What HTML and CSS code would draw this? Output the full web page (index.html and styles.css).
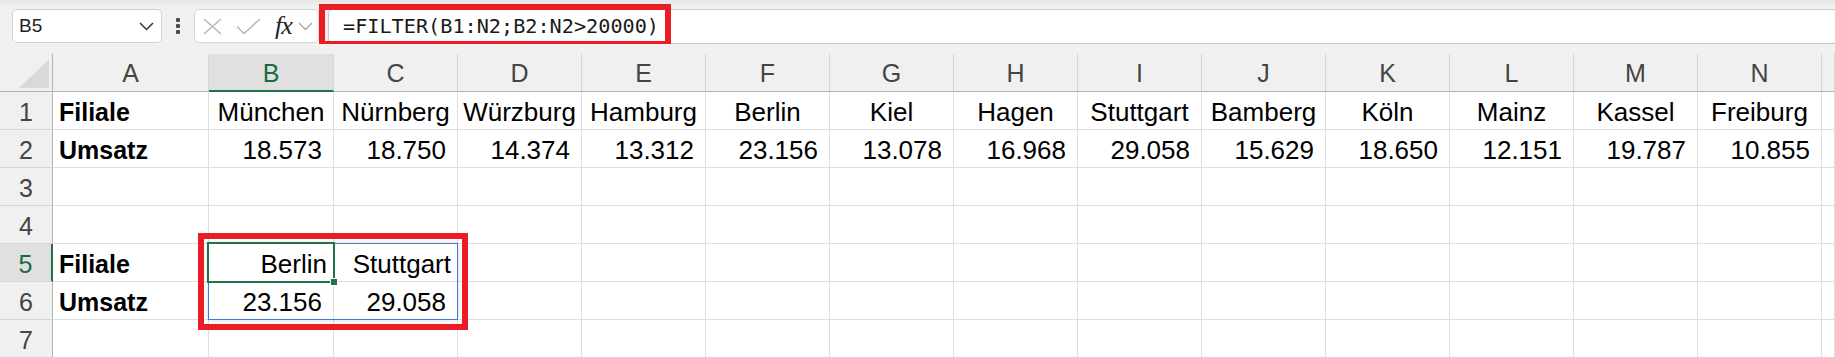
FILE: index.html
```html
<!DOCTYPE html>
<html lang="de">
  <head>
    <meta charset="utf-8">
    <title>FILTER</title>
    <link rel="stylesheet" href="styles.css">
  </head>
  <body>

    <div class="toolbar">
      <div class="namebox">
        <span>B5</span>
        <svg width="15" height="9" viewBox="0 0 15 9"><path d="M1 1l6.5 6.5L14 1" stroke="#333" stroke-width="1.5" fill="none"/></svg>
      </div>
      <div class="dots"><i></i><i></i><i></i></div>
      <div class="fxbtns">
        <svg class="ico-x" width="19" height="17" viewBox="0 0 19 17"><path d="M1 1l17 15M18 1L1 16" stroke="#b8b8b8" stroke-width="1.6" fill="none"/></svg>
        <svg class="ico-ok" width="25" height="17" viewBox="0 0 25 17"><path d="M1 8.5l7 7L24 1" stroke="#b8b8b8" stroke-width="1.6" fill="none"/></svg>
        <span class="fx">fx</span>
        <svg class="ico-dd" width="15" height="9" viewBox="0 0 15 9"><path d="M1 1l6.5 6.5L14 1" stroke="#a5a5a5" stroke-width="1.4" fill="none"/></svg>
      </div>
      <div class="formula">=FILTER(B1:N2;B2:N2&gt;20000)</div>
      <div class="mark formula-mark"></div>
    </div>

    <div class="sheet">
      <!-- column headers -->
      <div class="corner"></div>
      <div class="ch">A</div><div class="ch active">B</div><div class="ch">C</div><div class="ch">D</div>
      <div class="ch">E</div><div class="ch">F</div><div class="ch">G</div><div class="ch">H</div>
      <div class="ch">I</div><div class="ch">J</div><div class="ch">K</div><div class="ch">L</div>
      <div class="ch">M</div><div class="ch">N</div><div class="ch"></div>

      <!-- row 1 -->
      <div class="rh">1</div>
      <div class="c lbl">Filiale</div>
      <div class="c mid">München</div><div class="c mid">Nürnberg</div><div class="c mid">Würzburg</div>
      <div class="c mid">Hamburg</div><div class="c mid">Berlin</div><div class="c mid">Kiel</div>
      <div class="c mid">Hagen</div><div class="c mid">Stuttgart</div><div class="c mid">Bamberg</div>
      <div class="c mid">Köln</div><div class="c mid">Mainz</div><div class="c mid">Kassel</div>
      <div class="c mid">Freiburg</div><div class="c"></div>

      <!-- row 2 -->
      <div class="rh">2</div>
      <div class="c lbl">Umsatz</div>
      <div class="c num">18.573</div><div class="c num">18.750</div><div class="c num">14.374</div>
      <div class="c num">13.312</div><div class="c num">23.156</div><div class="c num">13.078</div>
      <div class="c num">16.968</div><div class="c num">29.058</div><div class="c num">15.629</div>
      <div class="c num">18.650</div><div class="c num">12.151</div><div class="c num">19.787</div>
      <div class="c num">10.855</div><div class="c"></div>

      <!-- row 3 -->
      <div class="rh">3</div>
      <div class="c"></div><div class="c"></div><div class="c"></div><div class="c"></div><div class="c"></div>
      <div class="c"></div><div class="c"></div><div class="c"></div><div class="c"></div><div class="c"></div>
      <div class="c"></div><div class="c"></div><div class="c"></div><div class="c"></div><div class="c"></div>

      <!-- row 4 -->
      <div class="rh">4</div>
      <div class="c"></div><div class="c"></div><div class="c"></div><div class="c"></div><div class="c"></div>
      <div class="c"></div><div class="c"></div><div class="c"></div><div class="c"></div><div class="c"></div>
      <div class="c"></div><div class="c"></div><div class="c"></div><div class="c"></div><div class="c"></div>

      <!-- row 5 -->
      <div class="rh active">5</div>
      <div class="c lbl">Filiale</div>
      <div class="c txt-r">Berlin</div><div class="c txt-r">Stuttgart</div>
      <div class="c"></div><div class="c"></div><div class="c"></div><div class="c"></div>
      <div class="c"></div><div class="c"></div><div class="c"></div><div class="c"></div>
      <div class="c"></div><div class="c"></div><div class="c"></div><div class="c"></div>

      <!-- row 6 -->
      <div class="rh">6</div>
      <div class="c lbl">Umsatz</div>
      <div class="c num">23.156</div><div class="c num">29.058</div>
      <div class="c"></div><div class="c"></div><div class="c"></div><div class="c"></div>
      <div class="c"></div><div class="c"></div><div class="c"></div><div class="c"></div>
      <div class="c"></div><div class="c"></div><div class="c"></div><div class="c"></div>

      <!-- row 7 -->
      <div class="rh">7</div>
      <div class="c"></div><div class="c"></div><div class="c"></div><div class="c"></div><div class="c"></div>
      <div class="c"></div><div class="c"></div><div class="c"></div><div class="c"></div><div class="c"></div>
      <div class="c"></div><div class="c"></div><div class="c"></div><div class="c"></div><div class="c"></div>

      <!-- selection overlays on B5:C6 -->
      <div class="spill"></div>
      <div class="cursor"><span class="handle"></span></div>
      <div class="mark range-mark"></div>
    </div>

  </body>
</html>
```

FILE: styles.css
```css
body{
  margin: 0;
  background: #fff;
  font-family: "Liberation Sans", Arial, sans-serif;
  color: #000;
  overflow: hidden;
}

/* formula bar */
.toolbar{
  position: relative;
  height: 44px;
  box-sizing: border-box;
  display: flex;
  align-items: flex-start;
  padding: 9px 0 0 12px;
  background: linear-gradient(#e6e6e6, #f0f0f0 7px);
}

.namebox{
  width: 150px;
  height: 34px;
  box-sizing: border-box;
  display: flex;
  align-items: center;
  justify-content: space-between;
  padding: 0 7px 0 6px;
  background: #fff;
  border: 1px solid #d2d2d2;
  border-radius: 5px;
  font-size: 19px;
  color: #1f1f1f;
}

.dots{
  display: flex;
  flex-direction: column;
  gap: 2px;
  margin: 9px 14px 0;
}
.dots i{
  width: 4px;
  height: 4px;
  border-radius: 1px;
  background: #4a4a4a;
}

.fxbtns{
  width: 125px;
  height: 34px;
  box-sizing: border-box;
  display: flex;
  align-items: center;
  padding-left: 8px;
  background: #fff;
  border: 1px solid #d6d6d6;
  border-radius: 5px;
}
.ico-ok{margin-left: 14px;}
.fx{
  margin-left: 14px;
  font-family: "Liberation Serif", serif;
  font-style: italic;
  font-size: 26px;
  line-height: 30px;
  color: #222;
  letter-spacing: -1px;
}
.ico-dd{margin-left: 6px;}

.formula{
  flex: 1;
  height: 35px;
  box-sizing: border-box;
  margin-left: 9px;
  padding-left: 14px;
  background: #fff;
  border: 1px solid #c9c9c9;
  border-right: none;
  border-radius: 5px 0 0 5px;
  font-family: "DejaVu Sans Mono", "Liberation Mono", monospace;
  font-size: 20.2px;
  line-height: 33px;
  color: #1a1a1a;
}

.mark{
  box-sizing: border-box;
  border: 6px solid #ec1c24;
}
.formula-mark{
  position: absolute;
  left: 319px;
  top: 4px;
  width: 352px;
  height: 43px;
}

/* grid */
.sheet{
  position: relative;
  display: grid;
  grid-template-columns: 53px 156px 125px repeat(12, 124px) 1fr;
  grid-template-rows: 48px repeat(7, 38px);
  background: linear-gradient(#f0f0f0 48px, #fff 48px);
}

.corner, .ch{
  margin-top: 10px;
  box-sizing: border-box;
  background: #f0f0f0;
  border-bottom: 1px solid #b3b3b3;
}

.corner{
  position: relative;
  border-right: 1px solid #b3b3b3;
}
.corner::after{
  content: "";
  position: absolute;
  right: 3px;
  bottom: 3px;
  width: 30px;
  height: 29px;
  background: #d9d9d9;
  clip-path: polygon(100% 0, 100% 100%, 0 100%);
}

.ch{
  border-right: 1px solid #d6d6d6;
  text-align: center;
  font-size: 25px;
  line-height: 33px;
  padding-top: 3px;
  color: #444;
}
.ch.active{
  background: #e0e0e0;
  color: #1e6b41;
  border-bottom: 2px solid #217346;
}

.rh{
  box-sizing: border-box;
  background: #f0f0f0;
  border-right: 1px solid #b3b3b3;
  border-bottom: 1px solid #d6d6d6;
  text-align: center;
  font-size: 25px;
  line-height: 34px;
  padding-top: 3px;
  color: #444;
}
.rh.active{
  background: #e0e0e0;
  color: #1e6b41;
  border-right: 2px solid #217346;
}

.c{
  box-sizing: border-box;
  border-right: 1px solid #dedede;
  border-bottom: 1px solid #dedede;
  padding: 3px 6px 0;
  font-size: 26px;
  line-height: 34px;
  white-space: nowrap;
  overflow: hidden;
}
.lbl{
  font-weight: bold;
  font-size: 25px;
}
.mid{text-align: center; padding: 3px 0 0;}
.num{text-align: right; padding-right: 11px;}
.txt-r{text-align: right;}

/* selection B5:C6, laid over the grid area */
.spill, .cursor, .range-mark{
  position: absolute;
  grid-column: 3 / 5;
  grid-row: 6 / 8;
  box-sizing: border-box;
}
.spill{
  inset: -1px 0 0 -1px;
  border: 1px solid #4775c9;
  box-shadow: 0 0 5px rgba(0, 0, 0, 0.16);
}
.cursor{
  grid-column: 3 / 4;
  grid-row: 6 / 7;
  inset: -2px -1px -1px -2px;
  border: 2px solid #217346;
}
.handle{
  position: absolute;
  right: -4px;
  bottom: -4px;
  width: 6px;
  height: 6px;
  background: #217346;
  box-shadow: 0 0 0 1px #fff;
}
.range-mark{
  inset: -11px -10px -10px -11px;
}
```
